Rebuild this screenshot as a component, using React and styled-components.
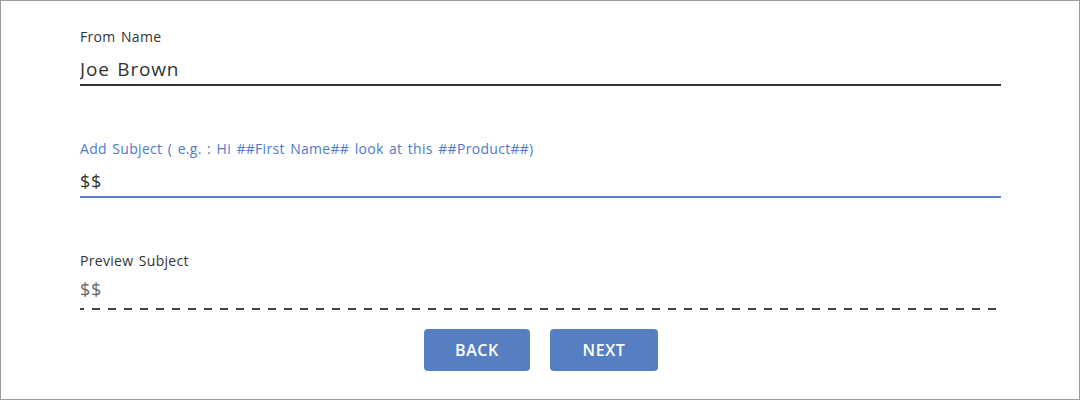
import styled, { createGlobalStyle } from "styled-components";

const GlobalStyle = createGlobalStyle`
  body {
    margin: 0;
    background: #fff;
  }
  * {
    box-sizing: border-box;
  }
`;

export default function App() {
  return (
    <>
      <GlobalStyle />
      <Page>
        <Form>
          <Field>
            <Label>From Name</Label>
            <Input variant="solid" value="Joe Brown" readOnly />
          </Field>
          <Field>
            <Label $active>
              Add Subject ( e.g. : Hi ##First Name## look at this ##Product##)
            </Label>
            <Input variant="focused" value="$$" readOnly />
          </Field>
          <Field>
            <Label>Preview Subject</Label>
            <Input variant="dashed" value="$$" readOnly disabled />
          </Field>
        </Form>
        <Actions>
          <Button>Back</Button>
          <Button $wide>Next</Button>
        </Actions>
      </Page>
    </>
  );
}

const Page = styled.div`
  width: 1080px;
  height: 400px;
  border: 1px solid #9a9a9a;
  padding: 25px 78px 0 79px;
  font-family: "Open Sans", "Liberation Sans", sans-serif;
  color: #333;
`;

const Form = styled.div`
  display: flex;
  flex-direction: column;
  gap: 52px;
`;

const Field = styled.div`
  display: flex;
  flex-direction: column;
`;

const Label = styled.label`
  font-size: 14px;
  line-height: 22px;
  letter-spacing: 0.3px;
  word-spacing: 1.5px;
  color: ${(p) => (p.$active ? "#4f7ac6" : "#333")};
`;

const lines = {
  solid: "border-bottom: 2px solid #333;",
  focused: "border-bottom: 2px solid #5a80c4;",
  dashed: `
    padding: 0 0 6px;
    background-image: repeating-linear-gradient(to right, #444 0 8px, transparent 8px 16px);
    background-size: 100% 2px;
    background-repeat: no-repeat;
    background-position: -4px bottom;
  `,
};

const Input = styled.input`
  width: 100%;
  height: 36px;
  margin-top: 2px;
  padding: 4px 0 0;
  border: none;
  outline: none;
  background: transparent;
  font-family: inherit;
  font-size: ${(p) => (p.variant === "solid" ? "19px" : "18px")};
  letter-spacing: 0.8px;
  word-spacing: 2px;
  color: ${(p) => (p.variant === "dashed" ? "#666" : "#333")};
  ${(p) => lines[p.variant]}
  &:disabled {
    -webkit-text-fill-color: #666;
  }
`;

const Actions = styled.div`
  display: flex;
  justify-content: center;
  gap: 20px;
  margin-top: 19px;
  padding-left: 1px;
`;

const Button = styled.button`
  width: ${(p) => (p.$wide ? "108px" : "106px")};
  height: 42px;
  border: none;
  border-radius: 4px;
  background: #557fc2;
  color: #fff;
  font-family: inherit;
  font-size: 16px;
  font-weight: 600;
  letter-spacing: 0.6px;
  text-transform: uppercase;
  cursor: pointer;
`;
